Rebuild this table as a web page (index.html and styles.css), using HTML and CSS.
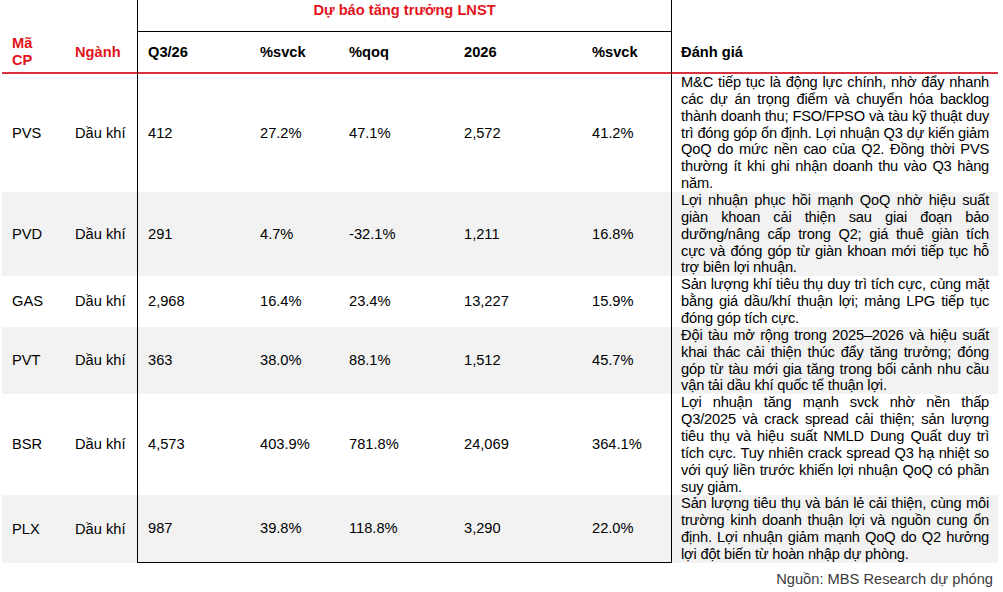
FILE: index.html
```html
<!DOCTYPE html>
<html lang="vi">
<head>
<meta charset="utf-8">
<title>Dự báo tăng trưởng LNST</title>
<link rel="stylesheet" href="styles.css">
</head>
<body>
<div class="page">
  <table class="forecast">
    <colgroup>
      <col class="c-code">
      <col class="c-sector">
      <col class="c-q">
      <col class="c-svck">
      <col class="c-qoq">
      <col class="c-year">
      <col class="c-svck2">
      <col class="c-note">
    </colgroup>
    <thead>
      <tr class="head-top">
        <th colspan="2"></th>
        <th colspan="5" class="group-title">Dự báo tăng trưởng LNST</th>
        <th></th>
      </tr>
      <tr class="head-main">
        <th class="red">Mã CP</th>
        <th class="red">Ngành</th>
        <th class="box-left">Q3/26</th>
        <th>%svck</th>
        <th>%qoq</th>
        <th>2026</th>
        <th class="box-right">%svck</th>
        <th class="note-head">Đánh giá</th>
      </tr>
    </thead>
    <tbody>
      <tr>
        <td>PVS</td><td>Dầu khí</td>
        <td class="box-left">412</td><td>27.2%</td><td>47.1%</td><td>2,572</td><td class="box-right">41.2%</td>
        <td class="note">M&amp;C tiếp tục là động lực chính, nhờ đẩy nhanh các dự án trọng điểm và chuyển hóa backlog thành doanh thu; FSO/FPSO và tàu kỹ thuật duy trì đóng góp ổn định. Lợi nhuận Q3 dự kiến giảm QoQ do mức nền cao của Q2. Đồng thời PVS thường ít khi ghi nhận doanh thu vào Q3 hàng năm.</td>
      </tr>
      <tr class="shade">
        <td>PVD</td><td>Dầu khí</td>
        <td class="box-left">291</td><td>4.7%</td><td>-32.1%</td><td>1,211</td><td class="box-right">16.8%</td>
        <td class="note">Lợi nhuận phục hồi mạnh QoQ nhờ hiệu suất giàn khoan cải thiện sau giai đoạn bảo dưỡng/nâng cấp trong Q2; giá thuê giàn tích cực và đóng góp từ giàn khoan mới tiếp tục hỗ trợ biên lợi nhuận.</td>
      </tr>
      <tr>
        <td>GAS</td><td>Dầu khí</td>
        <td class="box-left">2,968</td><td>16.4%</td><td>23.4%</td><td>13,227</td><td class="box-right">15.9%</td>
        <td class="note">Sản lượng khí tiêu thụ duy trì tích cực, cùng mặt bằng giá dầu/khí thuận lợi; mảng LPG tiếp tục đóng góp tích cực.</td>
      </tr>
      <tr class="shade">
        <td>PVT</td><td>Dầu khí</td>
        <td class="box-left">363</td><td>38.0%</td><td>88.1%</td><td>1,512</td><td class="box-right">45.7%</td>
        <td class="note">Đội tàu mở rộng trong 2025–2026 và hiệu suất khai thác cải thiện thúc đẩy tăng trưởng; đóng góp từ tàu mới gia tăng trong bối cảnh nhu cầu vận tải dầu khí quốc tế thuận lợi.</td>
      </tr>
      <tr>
        <td>BSR</td><td>Dầu khí</td>
        <td class="box-left">4,573</td><td>403.9%</td><td>781.8%</td><td>24,069</td><td class="box-right">364.1%</td>
        <td class="note">Lợi nhuận tăng mạnh svck nhờ nền thấp Q3/2025 và crack spread cải thiện; sản lượng tiêu thụ và hiệu suất NMLD Dung Quất duy trì tích cực. Tuy nhiên crack spread Q3 hạ nhiệt so với quý liền trước khiến lợi nhuận QoQ có phần suy giảm.</td>
      </tr>
      <tr class="shade last">
        <td>PLX</td><td>Dầu khí</td>
        <td class="box-left">987</td><td>39.8%</td><td>118.8%</td><td>3,290</td><td class="box-right">22.0%</td>
        <td class="note">Sản lượng tiêu thụ và bán lẻ cải thiện, cùng môi trường kinh doanh thuận lợi và nguồn cung ổn định. Lợi nhuận giảm mạnh QoQ do Q2 hưởng lợi đột biến từ hoàn nhập dự phòng.</td>
      </tr>
    </tbody>
  </table>
  <p class="source">Nguồn: MBS Research dự phóng</p>
</div>
</body>
</html>
```

FILE: styles.css
```css
html, body {
  margin: 0;
  padding: 0;
  background: #ffffff;
}

body {
  font-family: "Liberation Sans", Arial, sans-serif;
  font-size: 14.67px;
  color: #000000;
}

.page {
  padding: 0 5px 0 2px;
}

.forecast {
  table-layout: fixed;
  border-collapse: separate;
  border-spacing: 0;
  width: 996px;
}

.c-code { width: 63px; }
.c-sector { width: 72px; }
.c-q { width: 113px; }
.c-svck { width: 89px; }
.c-qoq { width: 115px; }
.c-year { width: 128px; }
.c-svck2 { width: 90px; }
.c-note { width: 326px; }

.forecast th,
.forecast td {
  box-sizing: border-box;
  padding: 0 10px;
  text-align: left;
  line-height: 16.86px;
}

.forecast th {
  font-weight: bold;
}

.head-top th {
  height: 32px;
  vertical-align: top;
  padding-top: 2px;
}

.group-title {
  text-align: center !important;
  color: #e3141b;
  border-left: 1px solid #000;
  border-right: 1px solid #000;
  border-bottom: 1px solid #000;
}

.head-main th {
  height: 42px;
  vertical-align: middle;
  border-bottom: 2px solid #d8323f;
}

.red {
  color: #e3141b;
}

.box-left {
  border-left: 1px solid #000;
}

.box-right {
  border-right: 1px solid #000;
}

.forecast td {
  vertical-align: middle;
}

.forecast .note,
.forecast .note-head {
  padding: 0 9px 0 9px;
}

.forecast .note {
  text-align: justify;
  letter-spacing: -0.2px;
}

.shade td {
  background: #f2f2f2;
}

.last .box-left,
.last .box-left ~ td:not(.note) {
  border-bottom: 1px solid #000;
}

.source {
  margin: 8px 0 0;
  padding-right: 5px;
  text-align: right;
  color: #3a3a3a;
  line-height: 17px;
}
```
